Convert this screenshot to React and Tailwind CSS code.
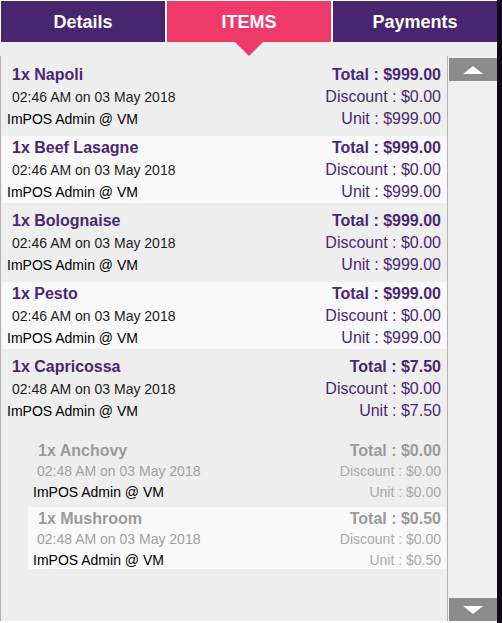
import React from 'react';

const items = [
    { name: '1x Napoli', time: '02:46 AM on 03 May 2018', total: '$999.00', discount: '$0.00', unit: '$999.00' },
    { name: '1x Beef Lasagne', time: '02:46 AM on 03 May 2018', total: '$999.00', discount: '$0.00', unit: '$999.00' },
    { name: '1x Bolognaise', time: '02:46 AM on 03 May 2018', total: '$999.00', discount: '$0.00', unit: '$999.00' },
    { name: '1x Pesto', time: '02:46 AM on 03 May 2018', total: '$999.00', discount: '$0.00', unit: '$999.00' },
    {
        name: '1x Capricossa',
        time: '02:48 AM on 03 May 2018',
        total: '$7.50',
        discount: '$0.00',
        unit: '$7.50',
        modifiers: [
            { name: '1x Anchovy', time: '02:48 AM on 03 May 2018', total: '$0.00', discount: '$0.00', unit: '$0.00' },
            { name: '1x Mushroom', time: '02:48 AM on 03 May 2018', total: '$0.50', discount: '$0.00', unit: '$0.50' },
        ],
    },
];

const tabs = ['Details', 'ITEMS', 'Payments'];

function Tab({ label, active }) {
    return (
        <div
            className={
                'relative flex-1 flex items-center justify-center pt-px text-[18px] font-bold text-white ' +
                (active ? 'bg-[#ee3969]' : 'bg-[#48266f]')
            }
        >
            {label}
            {active && (
                <div className="absolute left-1/2 top-full -translate-x-1/2 w-0 h-0 border-l-[14px] border-r-[14px] border-t-[14px] border-l-transparent border-r-transparent border-t-[#ee3969] z-10" />
            )}
        </div>
    );
}

function ItemRow({ item, light }) {
    return (
        <div className={'flex justify-between h-[67px] pt-px pr-[6px] leading-[22px] ' + (light ? 'bg-[#f9f9f9]' : 'bg-[#eeeeee]')}>
            <div className="pl-[5px]">
                <div className="pl-[5px] text-[16px] font-bold text-[#4a2775]">{item.name}</div>
                <div className="pl-[5px] text-[14px] text-[#1c1c1c]">{item.time}</div>
                <div className="text-[14px] text-black">ImPOS Admin @ VM</div>
            </div>
            <div className="text-right text-[16px] text-[#4a2775]">
                <div className="font-bold">Total : {item.total}</div>
                <div>Discount : {item.discount}</div>
                <div>Unit : {item.unit}</div>
            </div>
        </div>
    );
}

function ModifierRow({ item, light }) {
    return (
        <div className={'flex justify-between h-[62px] pt-px pr-[5px] leading-[21px] ' + (light ? 'bg-[#f9f9f9]' : 'bg-[#eeeeee]')}>
            <div className="pl-[5px]">
                <div className="pl-[5px] text-[16px] font-bold text-[#9a9a9a]">{item.name}</div>
                <div className="pl-[4px] text-[14px] text-[#a0a0a0]">{item.time}</div>
                <div className="text-[14px] text-black">ImPOS Admin @ VM</div>
            </div>
            <div className="text-right text-[#a8a8a8]">
                <div className="text-[16px] font-bold text-[#9a9a9a]">Total : {item.total}</div>
                <div className="text-[14px]">Discount : {item.discount}</div>
                <div className="text-[14px]">Unit : {item.unit}</div>
            </div>
        </div>
    );
}

export default function App() {
    return (
        <div className="flex w-[502px] h-[623px] bg-[#0e0b16]" style={{ fontFamily: '"Liberation Sans", Arial, sans-serif' }}>
            <div className="w-[497px] flex flex-col bg-white pt-px pb-[2px]">
                <div className="flex gap-[2px] pl-px h-[41px]">
                    {tabs.map((t) => (
                        <Tab key={t} label={t} active={t === 'ITEMS'} />
                    ))}
                </div>

                <div className="flex-1 flex flex-col bg-[#eeeeee] pt-[14px] min-h-0">
                    <div className="flex-1 flex min-h-0">
                        <div className="flex-1 border-l border-r border-[#b4b4b4] pl-px pt-[7px] overflow-hidden">
                            <div className="flex flex-col gap-[6px]">
                                {items.map((item, i) => (
                                    <div key={item.name}>
                                        <ItemRow item={item} light={i % 2 === 1} />
                                        {item.modifiers && (
                                            <div className="flex flex-col gap-[6px] mt-[17px] ml-[26px] mr-px">
                                                {item.modifiers.map((m, j) => (
                                                    <ModifierRow key={m.name} item={m} light={j % 2 === 1} />
                                                ))}
                                            </div>
                                        )}
                                    </div>
                                ))}
                            </div>
                        </div>

                        <div className="w-[49px] flex flex-col justify-between pl-px pt-[2px] bg-[#f0f0f0]">
                            <button className="h-[23px] w-full bg-[#8c8c8c] flex items-center justify-center">
                                <span className="w-0 h-0 border-l-[10px] border-r-[10px] border-b-[8px] border-l-transparent border-r-transparent border-b-white" />
                            </button>
                            <button className="h-[23px] w-full bg-[#8c8c8c] flex items-center justify-center">
                                <span className="w-0 h-0 border-l-[10px] border-r-[10px] border-t-[8px] border-l-transparent border-r-transparent border-t-white" />
                            </button>
                        </div>
                    </div>
                </div>
            </div>
        </div>
    );
}
